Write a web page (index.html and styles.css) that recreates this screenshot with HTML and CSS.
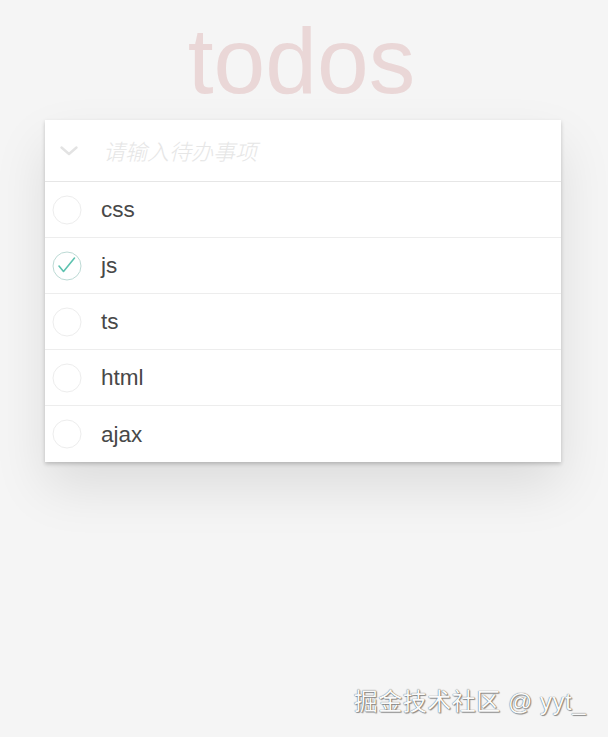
FILE: index.html
```html
<!DOCTYPE html>
<html lang="zh">
<head>
<meta charset="utf-8">
<title>todos</title>
<link rel="stylesheet" href="styles.css">
</head>
<body>
<div class="page">
  <h1 class="title">todos</h1>
  <section class="todoapp">
    <header class="new-row">
      <span class="toggle-all">
        <svg width="20" height="12" viewBox="0 0 20 12"><polyline points="2.5,2.5 10,9 17.5,2.5" fill="none" stroke="#e3e3e3" stroke-width="2.4" stroke-linecap="round" stroke-linejoin="round"/></svg>
      </span>
      <span class="placeholder">请输入待办事项</span>
    </header>
    <ul class="list">
      <li class="item"><span class="check"><svg width="30" height="30" viewBox="0 0 30 30"><circle cx="15" cy="15" r="14" fill="none" stroke="#ededed" stroke-width="1"/></svg></span><span class="label">css</span></li>
      <li class="item"><span class="check"><svg width="30" height="30" viewBox="0 0 30 30"><circle cx="15" cy="15" r="14" fill="none" stroke="#bddad5" stroke-width="1"/><polyline points="7,15 11.5,20.5 22.5,7" fill="none" stroke="#5dc2af" stroke-width="1.6" stroke-linecap="round" stroke-linejoin="round"/></svg></span><span class="label">js</span></li>
      <li class="item"><span class="check"><svg width="30" height="30" viewBox="0 0 30 30"><circle cx="15" cy="15" r="14" fill="none" stroke="#ededed" stroke-width="1"/></svg></span><span class="label">ts</span></li>
      <li class="item"><span class="check"><svg width="30" height="30" viewBox="0 0 30 30"><circle cx="15" cy="15" r="14" fill="none" stroke="#ededed" stroke-width="1"/></svg></span><span class="label">html</span></li>
      <li class="item"><span class="check"><svg width="30" height="30" viewBox="0 0 30 30"><circle cx="15" cy="15" r="14" fill="none" stroke="#ededed" stroke-width="1"/></svg></span><span class="label">ajax</span></li>
    </ul>
  </section>
</div>
<div class="watermark">掘金技术社区 @ yyt_</div>
</body>
</html>
```

FILE: styles.css
```css
html, body {
  margin: 0;
  padding: 0;
  background: #f5f5f5;
  height: 100%;
}
body {
  font-family: "Liberation Sans", Arial, "Noto Sans CJK SC", sans-serif;
  color: #4d4d4d;
  position: relative;
  overflow: hidden;
}
.page {
  padding-top: 15px;
}
.title {
  margin: 0;
  height: 92px;
  font-size: 93px;
  line-height: 92px;
  font-weight: normal;
  text-align: center;
  color: rgba(175, 47, 47, 0.15);
  padding-right: 5px;
}
.todoapp {
  margin: 13px 0 0 45px;
  width: 516px;
  background: #fff;
  box-shadow: 0 2px 4px 0 rgba(0, 0, 0, 0.2), 0 25px 50px 0 rgba(0, 0, 0, 0.1);
}
.new-row {
  height: 61px;
  border-bottom: 1px solid #e6e6e6;
  display: flex;
  align-items: center;
}
.toggle-all {
  width: 20px;
  height: 12px;
  margin-left: 14px;
  display: flex;
}
.placeholder {
  margin-left: 24px;
  font-family: "Noto Sans CJK SC", sans-serif;
  font-style: italic;
  font-weight: 300;
  font-size: 22px;
  color: #e6e6e6;
  line-height: 1;
  margin-top: -1px;
}
.list {
  list-style: none;
  margin: 0;
  padding: 0;
}
.item {
  height: 55px;
  border-bottom: 1px solid #ededed;
  display: flex;
  align-items: center;
}
.item:last-child {
  height: 56px;
  border-bottom: none;
}
.check {
  width: 30px;
  height: 30px;
  margin-left: 7px;
  display: flex;
}
.label {
  margin-left: 19px;
  font-size: 22.5px;
  line-height: 1.2;
  color: #484848;
}
.watermark {
  position: absolute;
  right: 22px;
  bottom: 23px;
  font-family: "Liberation Sans", "Noto Sans CJK SC", sans-serif;
  font-size: 24px;
  letter-spacing: 0.5px;
  line-height: 1;
  color: #fafafa;
  text-shadow: 0 0 1px #333, 1px 1px 1px rgba(0, 0, 0, 0.4);
}
```
